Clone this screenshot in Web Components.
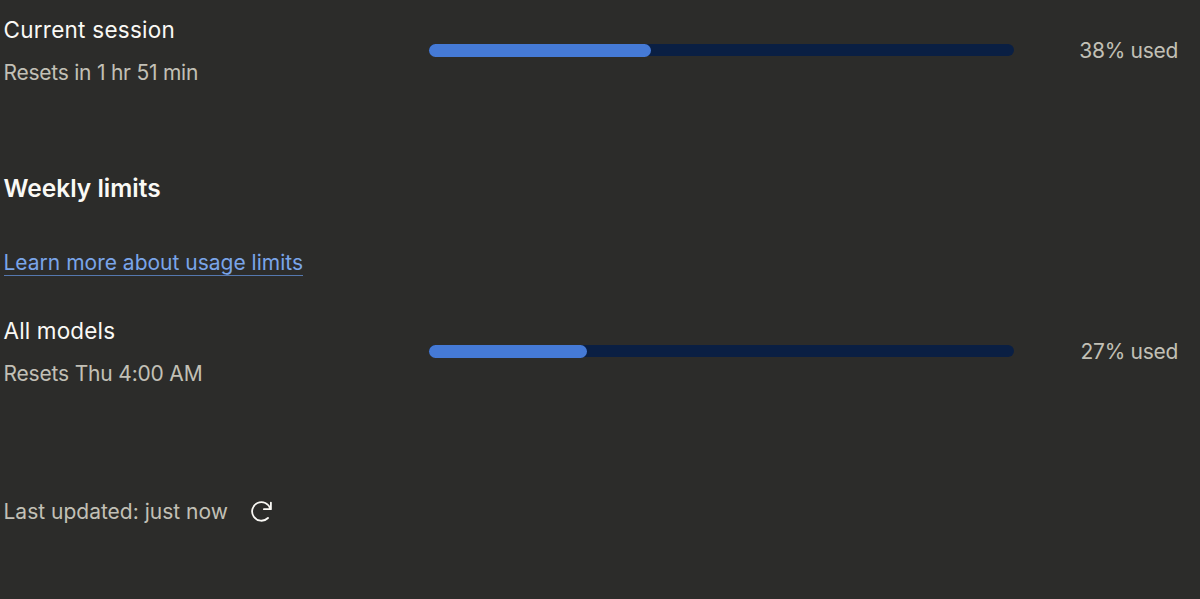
<!DOCTYPE html>
<html lang="en">
<head>
<meta charset="utf-8">
<title>Usage</title>
<style>
    body{
        margin: 0;
        min-height: 599px;
        background-color: #2c2c2a;
        font-family: Inter, "Liberation Sans", sans-serif;
        font-size: 21px;
        line-height: 32px;
        color: #faf9f5;
        --muted: #c2c0b6;
        --fill: #457ad6;
        --track: #0a1f43;
        --link: #7aa5e9;
    }
</style>
</head>
<body>
<usage-panel>
    <usage-meter percent="38">
        <span style="letter-spacing: 0.25px">Current session</span>
        <span slot="reset" style="letter-spacing: -0.24px">Resets in 1 hr 51 min</span>
    </usage-meter>
    <usage-heading>
        Weekly limits
        <usage-link slot="link" href="#">Learn more about usage limits</usage-link>
    </usage-heading>
    <usage-meter percent="27">
        <span style="letter-spacing: 0.15px">All models</span>
        <span slot="reset" style="letter-spacing: -0.18px">Resets Thu 4:00 AM</span>
    </usage-meter>
    <usage-updated>Last updated: just now</usage-updated>
</usage-panel>
<script>
window.customElements.define('usage-panel', class extends HTMLElement{
    constructor(){
        super();
        this.attachShadow({ mode: 'open' });
        this.shadowRoot.innerHTML = `
        <style>
            :host{
                display: flex;
                flex-direction: column;
                box-sizing: border-box;
                height: 599px;
                padding: 14px 22px 0 3.5px;
            }
        </style>
        <slot></slot>`;
    }
});

window.customElements.define('usage-meter', class extends HTMLElement{
    constructor(){
        super();
        this.attachShadow({ mode: 'open' });
    }
    styles(){
        return `
        <style>
            :host{
                display: grid;
                grid-template-columns: 425.5px 585px 1fr;
                height: 75px;
                white-space: nowrap;
            }
            .labels{
                display: flex;
                flex-direction: column;
                gap: 11px;
            }
            .labels div{
                height: 32px;
            }
            .name{
                font-size: 22.5px;
            }
            .reset, .used{
                color: var(--muted);
            }
            .track{
                height: 12px;
                margin-top: 29.5px;
                border-radius: 6px;
                background-color: var(--track);
            }
            .fill{
                height: 13px;
                border-radius: 6.5px;
                background-color: var(--fill);
            }
            .used{
                padding-top: 21px;
                text-align: right;
                letter-spacing: -0.3px;
            }
        </style>
        `;
    }
    connectedCallback(){
        const percent = this.getAttribute('percent');
        this.shadowRoot.innerHTML = `
            ${this.styles()}
            <div class="labels">
                <div class="name"><slot></slot></div>
                <div class="reset"><slot name="reset"></slot></div>
            </div>
            <div class="track"><div class="fill" style="width: ${percent}%"></div></div>
            <div class="used">${percent}% used</div>`;
    }
});

window.customElements.define('usage-heading', class extends HTMLElement{
    constructor(){
        super();
        this.attachShadow({ mode: 'open' });
        this.shadowRoot.innerHTML = `
        <style>
            :host{
                display: flex;
                flex-direction: column;
                align-items: flex-start;
                gap: 43px;
                margin: 83px 0 39px;
            }
            h2{
                margin: 0;
                font-size: 24.5px;
                font-weight: 600;
                line-height: 32px;
            }
        </style>
        <h2><slot></slot></h2>
        <slot name="link"></slot>`;
    }
});

window.customElements.define('usage-link', class extends HTMLElement{
    constructor(){
        super();
        this.attachShadow({ mode: 'open' });
    }
    connectedCallback(){
        this.shadowRoot.innerHTML = `
        <style>
            :host{
                display: block;
            }
            a{
                display: block;
                height: 28px;
                line-height: 32px;
                border-bottom: 1px solid #5578ae;
                color: var(--link);
                text-decoration: none;
            }
        </style>
        <a href="${this.getAttribute('href')}"><slot></slot></a>`;
    }
});

window.customElements.define('usage-updated', class extends HTMLElement{
    constructor(){
        super();
        this.attachShadow({ mode: 'open' });
        this.shadowRoot.innerHTML = `
        <style>
            :host{
                display: flex;
                align-items: center;
                height: 32px;
                margin-top: 106px;
                color: var(--muted);
            }
            .text{
                width: 243.5px;
                white-space: nowrap;
            }
            svg{
                display: block;
                color: #faf9f5;
            }
        </style>
        <div class="text"><slot></slot></div>
        <svg width="28" height="28" viewBox="0 0 28 28" fill="none" stroke="currentColor" stroke-width="1.8" stroke-linecap="round" stroke-linejoin="round">
            <path d="M23.9 4.6v6.6h-7M23.4 11A9.3 9.3 0 1 0 21 20"/>
        </svg>`;
    }
});
</script>
</body>
</html>
